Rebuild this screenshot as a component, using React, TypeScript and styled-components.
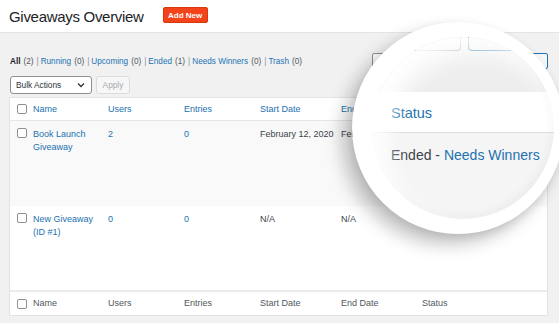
import React from 'react';
import styled, { createGlobalStyle } from 'styled-components';

const GlobalStyle = createGlobalStyle`
  html, body {
    margin: 0;
    padding: 0;
    background: #f1f1f1;
  }
  body {
    font-family: "Liberation Sans", Arial, sans-serif;
    color: #3c434a;
  }
`;

const Page = styled.div`
  position: relative;
  width: 559px;
  height: 323px;
  overflow: hidden;
  background: #f1f1f1;
`;

const Header = styled.header`
  display: flex;
  align-items: center;
  gap: 19px;
  height: 33px;
  padding-left: 9px;
  background: #fff;
  border-bottom: 1px solid #e4e4e4;
  box-sizing: border-box;
`;

const Title = styled.h1`
  margin: 0;
  font-size: 15px;
  font-weight: 400;
  letter-spacing: -0.3px;
  color: #1d2327;
`;

const AddNew = styled.button`
  height: 16px;
  width: 45px;
  padding: 0;
  border: 1px solid #d9380e;
  border-radius: 2px;
  background: #f2431a;
  color: #fff;
  font-family: inherit;
  font-size: 8px;
  font-weight: 700;
  margin-top: -2px;
`;

const Content = styled.div`
  display: flex;
  flex-direction: column;
  padding: 0 11px 0 9px;
`;

const FilterBar = styled.div`
  display: flex;
  align-items: center;
  justify-content: space-between;
  height: 16px;
  margin-top: 20px;
`;

const Filters = styled.div`
  display: flex;
  align-items: center;
  font-size: 8.2px;
  color: #50575e;
  padding-left: 1px;
`;

const FilterItem = styled.span<{ $current?: boolean }>`
  color: ${(p) => (p.$current ? '#1d2327' : '#2271b1')};
  font-weight: ${(p) => (p.$current ? 700 : 400)};
`;

const Count = styled.span`
  margin: 0 2px 0 3px;
  color: #50575e;
`;

const Sep = styled.span`
  margin: 0 2px 0 1px;
  color: #8c8f94;
`;

const SearchGroup = styled.div`
  display: flex;
  gap: 4px;
`;

const SearchInput = styled.div`
  width: 128px;
  height: 16px;
  border: 1px solid #8c8f94;
  border-radius: 2px;
  background: #fff;
  box-sizing: border-box;
`;

const SearchButton = styled.div`
  width: 44px;
  height: 16px;
  border: 1px solid #2271b1;
  border-radius: 2px;
  background: #f6f7f7;
  box-sizing: border-box;
`;

const Actions = styled.div`
  display: flex;
  gap: 4px;
  margin-top: 7px;
  padding-left: 1px;
`;

const Select = styled.div`
  display: flex;
  align-items: center;
  justify-content: space-between;
  width: 82px;
  height: 18px;
  padding: 0 6px 0 5px;
  box-sizing: border-box;
  border: 1px solid #8c8f94;
  border-radius: 3px;
  background: #fff;
  font-size: 8.3px;
  color: #2c3338;
`;

const Apply = styled.div`
  display: flex;
  align-items: center;
  justify-content: center;
  width: 34px;
  height: 18px;
  box-sizing: border-box;
  border: 1px solid #dcdcde;
  border-radius: 3px;
  background: #f6f7f7;
  font-size: 8.3px;
  color: #a7aaad;
`;

const Table = styled.div`
  margin-top: 3px;
  width: 539px;
  background: #fff;
  border: 1px solid #e3e3e3;
  box-sizing: border-box;
`;

const Row = styled.div<{ $kind: 'head' | 'odd' | 'even' | 'foot' }>`
  display: grid;
  grid-template-columns: 23px 75px 76px 76px 81px 81px 1fr;
  align-items: ${(p) => (p.$kind === 'head' || p.$kind === 'foot' ? 'center' : 'start')};
  height: ${(p) => (p.$kind === 'head' ? 23 : p.$kind === 'foot' ? 25 : p.$kind === 'odd' ? 85 : 84)}px;
  padding-top: ${(p) => (p.$kind === 'odd' || p.$kind === 'even' ? 7 : 0)}px;
  box-sizing: border-box;
  background: ${(p) => (p.$kind === 'odd' ? '#f9f9f9' : '#fff')};
  border-bottom: ${(p) => (p.$kind === 'head' ? '1px solid #e6e6e6' : '0')};
  border-top: ${(p) => (p.$kind === 'foot' ? '2px solid #ebebeb' : '0')};
  font-size: 9px;
`;

const Cell = styled.div<{ $link?: boolean; $muted?: boolean }>`
  color: ${(p) => (p.$link ? '#2271b1' : p.$muted ? '#50575e' : '#3c434a')};
  line-height: 12.5px;
  padding-right: 4px;
`;

const CheckCell = styled.div`
  display: flex;
  padding-left: 7px;
`;

const Check = styled.span`
  width: 10px;
  height: 10px;
  border: 1px solid #8c8f94;
  border-radius: 2px;
  background: #fff;
  box-sizing: border-box;
`;

const Lens = styled.div`
  position: absolute;
  left: 352px;
  top: 22px;
  width: 212px;
  height: 212px;
  border-radius: 50%;
  background: #fff;
  box-sizing: border-box;
  padding: 15px 0 0 20px;
  box-shadow: -10px 10px 18px rgba(0, 0, 0, 0.24), 0 3px 8px rgba(0, 0, 0, 0.08);
`;

const LensGlass = styled.div`
  position: relative;
  width: 182px;
  height: 182px;
  border-radius: 50%;
  overflow: hidden;
  display: flex;
  flex-direction: column;
  background: #f5f5f5;
  &::after {
    content: '';
    position: absolute;
    inset: 0;
    border-radius: 50%;
    box-shadow: inset 14px 16px 22px rgba(255, 255, 255, 0.95),
      inset -3px -3px 8px rgba(0, 0, 0, 0.04);
    pointer-events: none;
  }
`;

const LensTop = styled.div`
  display: flex;
  gap: 7px;
  height: 55px;
  flex-shrink: 0;
  background: #eeeeee;
`;

const ZoomBox = styled.div<{ $blue?: boolean }>`
  flex-shrink: 0;
  height: 14px;
  margin-left: ${(p) => (p.$blue ? 0 : -20)}px;
  width: ${(p) => (p.$blue ? 120 : 109)}px;
  border: 1.5px solid ${(p) => (p.$blue ? '#2a7db8' : '#8c8f94')};
  border-top: 0;
  border-radius: 0 0 4px 4px;
  box-sizing: border-box;
`;

const LensHead = styled.div`
  height: 41px;
  flex-shrink: 0;
  display: flex;
  align-items: center;
  padding: 2px 0 0 19px;
  box-sizing: border-box;
  background: #fff;
  border-bottom: 1.5px solid #dedede;
  color: #2271b1;
  font-size: 14.5px;
`;

const LensBody = styled.div`
  padding: 14px 0 0 19px;
  font-size: 14px;
  color: #3c434a;
  white-space: nowrap;
`;

const LensLink = styled.span`
  color: #2271b1;
`;

const Chevron = () => (
  <svg width="8" height="6" viewBox="0 0 8 6">
    <path d="M1 1.5 L4 4.5 L7 1.5" fill="none" stroke="#2c3338" strokeWidth="1.3" />
  </svg>
);

const filters: [string, number][] = [
  ['All', 2],
  ['Running', 0],
  ['Upcoming', 0],
  ['Ended', 1],
  ['Needs Winners', 0],
  ['Trash', 0],
];

const columns = ['Name', 'Users', 'Entries', 'Start Date', 'End Date', 'Status'];

const rows = [
  { name: ['Book Launch', 'Giveaway'], users: '2', entries: '0', start: 'February 12, 2020', end: 'February 20, 2020' },
  { name: ['New Giveaway', '(ID #1)'], users: '0', entries: '0', start: 'N/A', end: 'N/A' },
];

const App: React.FC = () => {
  return (
    <Page>
      <GlobalStyle />
      <Header>
        <Title>Giveaways Overview</Title>
        <AddNew>Add New</AddNew>
      </Header>
      <Content>
        <FilterBar>
          <Filters>
            {filters.map(([label, n], i) => (
              <React.Fragment key={label}>
                {i > 0 && <Sep>|</Sep>}
                <FilterItem $current={i === 0}>{label}</FilterItem>
                <Count>({n})</Count>
              </React.Fragment>
            ))}
          </Filters>
          <SearchGroup>
            <SearchInput />
            <SearchButton />
          </SearchGroup>
        </FilterBar>
        <Actions>
          <Select>
            Bulk Actions
            <Chevron />
          </Select>
          <Apply>Apply</Apply>
        </Actions>
        <Table>
          <Row $kind="head">
            <CheckCell><Check /></CheckCell>
            {columns.map((c) => (
              <Cell key={c} $link>{c}</Cell>
            ))}
          </Row>
          {rows.map((r, i) => (
            <Row key={r.name[0]} $kind={i === 0 ? 'odd' : 'even'}>
              <CheckCell><Check /></CheckCell>
              <Cell $link>
                {r.name[0]}
                <br />
                {r.name[1]}
              </Cell>
              <Cell $link>{r.users}</Cell>
              <Cell $link>{r.entries}</Cell>
              <Cell>{r.start}</Cell>
              <Cell>{r.end}</Cell>
              <Cell />
            </Row>
          ))}
          <Row $kind="foot">
            <CheckCell><Check /></CheckCell>
            {columns.map((c) => (
              <Cell key={c} $muted>{c}</Cell>
            ))}
          </Row>
        </Table>
      </Content>
      <Lens>
        <LensGlass>
          <LensTop>
            <ZoomBox />
            <ZoomBox $blue />
          </LensTop>
          <LensHead>Status</LensHead>
          <LensBody>
            Ended - <LensLink>Needs Winners</LensLink>
          </LensBody>
        </LensGlass>
      </Lens>
    </Page>
  );
};

export default App;
